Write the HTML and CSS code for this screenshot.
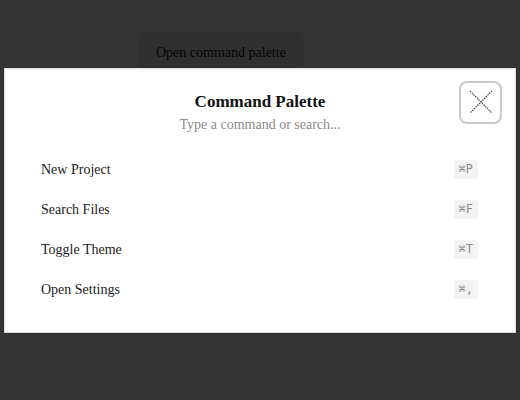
FILE: index.html
```html
<!DOCTYPE html>
<html lang="en">
  <head>
    <meta charset="UTF-8" />
    <meta name="viewport" content="width=device-width, initial-scale=1.0" />
    <title>Command Palette</title>
    <link rel="stylesheet" href="styles.css">
  </head>
  <body>
    <main class="page">
      <button class="open-btn">Open command palette</button>
    </main>

    <div class="backdrop">
      <div class="palette" role="dialog" aria-labelledby="palette-title">
        <button class="close-btn" aria-label="Close">
          <svg width="24" height="24" viewBox="0 0 24 24">
            <line x1="1" y1="1" x2="23" y2="23" />
            <line x1="23" y1="1" x2="1" y2="23" />
          </svg>
        </button>
        <h2 id="palette-title" class="title">Command Palette</h2>
        <p class="hint">Type a command or search...</p>

        <ul class="commands">
          <li class="command"><span>New Project</span><kbd>⌘P</kbd></li>
          <li class="command"><span>Search Files</span><kbd>⌘F</kbd></li>
          <li class="command"><span>Toggle Theme</span><kbd>⌘T</kbd></li>
          <li class="command"><span>Open Settings</span><kbd>⌘,</kbd></li>
        </ul>
      </div>
    </div>
  </body>
</html>
```

FILE: styles.css
```css
body {
  margin: 0;
  font-family: "Liberation Serif", "Times New Roman", serif;
  background: #fff;
  color: #111;
}

.page {
  padding: 32px 0 0 139px;
}

.open-btn {
  font-family: inherit;
  font-size: 14px;
  height: 38px;
  padding: 3px 16px 0;
  background: #f0f0f0;
  border: 1px solid #e2e2e2;
  border-radius: 6px;
  color: #111;
}

.backdrop {
  position: fixed;
  inset: 0;
  background: rgba(0, 0, 0, 0.8);
  display: flex;
  align-items: center;
  justify-content: center;
}

.palette {
  position: relative;
  box-sizing: border-box;
  width: 512px;
  background: #fff;
  border: 1px solid #dcdcdc;
  padding: 22px 36px 22px;
}

.close-btn {
  position: absolute;
  top: 12px;
  right: 13px;
  width: 43px;
  height: 43px;
  box-sizing: border-box;
  background: #fff;
  border: 2px solid #c9c9c9;
  border-radius: 8px;
  display: flex;
  align-items: center;
  justify-content: center;
  padding: 0;
}

.close-btn svg line {
  stroke: #555;
  stroke-width: 1.3;
  stroke-dasharray: 1.6 0.8;
}

.title {
  margin: 0;
  font-size: 17px;
  line-height: 22px;
  text-align: center;
  color: #111;
}

.hint {
  margin: 2px 0 0;
  font-size: 14px;
  line-height: 20px;
  text-align: center;
  color: #8a8a8a;
}

.commands {
  list-style: none;
  margin: 15px 0 0;
  padding: 0;
}

.command {
  height: 40px;
  display: flex;
  align-items: center;
  justify-content: space-between;
  font-size: 14px;
  color: #222;
}

kbd {
  margin-right: 1px;
  font-family: "DejaVu Sans Mono", monospace;
  font-size: 12px;
  line-height: 19px;
  padding: 0 5px;
  background: #f3f3f3;
  border-radius: 3px;
  color: #8a8a8a;
}
```
